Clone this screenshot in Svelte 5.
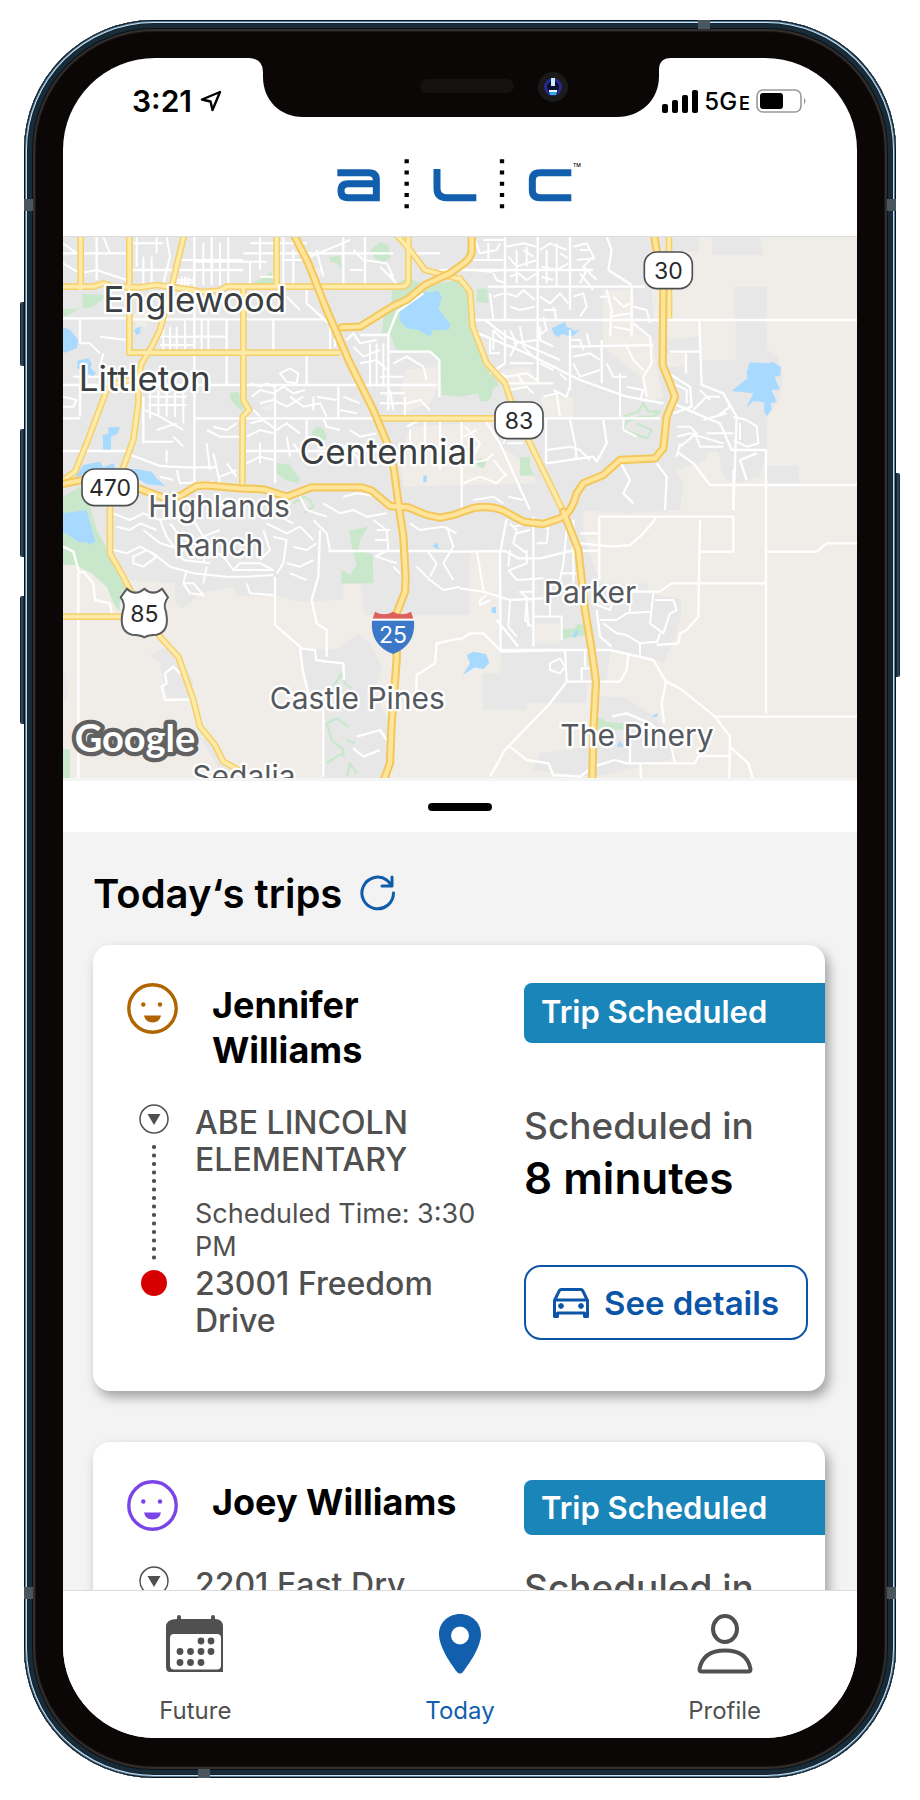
<script lang="ts">
	interface Trip {
		id: number;
		rider: string;
		color: string;
		status: string;
		pickup: string;
		time?: string;
		dropoff?: string;
		due?: string;
	}

	const trips: Trip[] = [
		{
			id: 1,
			rider: 'Jennifer Williams',
			color: '#b06500',
			status: 'Trip Scheduled',
			pickup: 'ABE LINCOLN ELEMENTARY',
			time: '3:30 PM',
			dropoff: '23001 Freedom Drive',
			due: '8 minutes'
		},
		{
			id: 2,
			rider: 'Joey Williams',
			color: '#7a45e6',
			status: 'Trip Scheduled',
			pickup: '2201 East Dry'
		}
	];

	let tab = $state('Today');

	const tabs = ['Future', 'Today', 'Profile'];

	// Map geometry, three units to a pixel
	const water = [
		'M1020 240 1050 215 1075 190 1135 183 1145 205 1135 235 1172 285 1165 300 1120 300 1110 320 1075 300 1040 295 1018 270Z',
		'M1475 295 1515 275 1520 290 1545 302 1560 300 1535 320 1505 312 1495 322 1482 312Z',
		'M2070 397 2125 400 2140 396 2163 412 2160 438 2143 440 2160 478 2135 480 2150 515 2132 520 2135 540 2120 558 2112 545 2113 518 2080 513 2058 535 2080 490 2015 483 2062 445 2060 425Z',
		'M9 292 30 300 55 330 50 355 15 368 9 365Z',
		'M52 392 85 385 95 400 92 415 108 430 98 440 75 425 52 415Z',
		'M145 592 180 592 172 612 153 620 153 660 130 662 128 615 145 612Z',
		'M45 740 70 705 120 695 130 712 160 700 165 715 235 718 275 725 290 745 315 768 260 762 225 740Z',
		'M9 850 80 840 92 885 107 935 85 945 80 935 60 938 9 905Z',
		'M1220 1275 1240 1265 1278 1272 1288 1298 1270 1318 1245 1312 1208 1335 1230 1300Z',
		'M222 300 242 288 240 310 228 315Z',
		'M308 315 322 320 318 328 308 326Z',
		'M1118 950 1130 935 1138 958Z',
		'M1295 1133 1308 1130 1308 1150 1295 1148Z',
		'M1545 1202 1557 1200 1548 1222 1538 1222Z',
		'M1670 1550 1680 1532 1690 1550Z',
		'M1775 1460 1793 1448 1792 1460Z',
		'M1090 738 1100 736 1100 757 1090 757Z'
	];

	const parks = [
		'M995 165 1045 145 1100 165 1200 150 1230 180 1238 290 1280 400 1318 465 1300 475 1295 500 1280 515 1260 512 1255 490 1200 500 1145 495 1138 390 1110 368 1010 362 990 312 965 308 970 265 995 240Z',
		'M930 62 960 35 985 45 992 80 970 98 945 85Z',
		'M807 80 840 78 845 118 830 100 812 95Z',
		'M578 160 612 140 635 125 640 165Z',
		'M66 192 130 195 128 208 100 230 70 235Z',
		'M9 238 60 235 9 265Z',
		'M510 490 535 485 545 520 550 545 530 530 512 510Z',
		'M650 698 690 705 718 745 715 760 680 752 650 730Z',
		'M755 605 770 590 790 595 800 625 780 640 755 620Z',
		'M9 800 60 770 90 830 110 900 145 960 175 1030 205 1085 180 1110 178 1145 160 1120 140 1070 95 1030 45 1005 9 1005Z',
		'M1250 178 1282 175 1285 220 1250 215Z',
		'M1380 682 1410 682 1410 715 1425 737 1380 737Z',
		'M1248 690 1265 684 1280 695 1270 715 1250 708Z',
		'M868 900 880 900 925 890 900 930 895 960 938 975 940 1060 842 1060 845 1020 870 1035 890 1005 875 950Z',
		'M1508 1198 1545 1195 1550 1183 1575 1182 1575 1215 1510 1226Z',
		'M1612 1460 1640 1475 1695 1480 1690 1500 1640 1495 1612 1500Z',
		'M9 1555 30 1560 30 1644 9 1644Z'
	];

	const trails = [
		'M1690 560 1735 545 1750 520 1765 545 1800 545 1775 560 1740 560 1700 575 1688 600 1720 610 1760 625 1775 600 1730 580',
		'M820 1370 845 1330 855 1360 875 1375M800 1480 830 1465 865 1490M800 1480 815 1530 850 1560 850 1580M860 1530 885 1540M800 1600 845 1570M860 1640 870 1600 890 1630',
		'M700 820 730 800 750 810 760 830 730 850'
	];

	const arterials = [
		'M9 70H200M215 120H550M403 21V765M455 21V165M110 21V150M850 21V170M915 21V170M1035 70H1140M550 70H1000',
		'M210 268H800M403 320H500M500 268V465M640 268V370M9 265H210M60 265V340M740 165V220L840 310',
		'M9 465H1130M60 465V560M9 565H60M250 500V640M403 565H950M645 465V760M740 370V465M835 470V565M9 663H205M200 670 300 708 380 712 470 712M550 663H960M740 565V650',
		'M985 312 1012 245 1090 190M985 312V540M900 315H985M990 365H1110L1138 390V500M1035 500V565M1140 565V720M1095 565V640',
		'M1138 120H1600M1285 170H1755M1235 270H2391M1335 21V270M1433 21V460M1530 21V240M1335 300V400L1290 430',
		'M1255 310 1400 370 1560 450 1700 500 1810 520M1335 460H1480M1450 565H1800M1458 565V700M1530 300V480M1625 330V460M1715 170V320M1530 350 1780 345',
		'M1640 21 1655 60 1645 120 1715 165M1640 180 1655 240 1650 320M1275 270 1340 320 1500 390',
		'M1918 270 1925 465 1990 490 2030 560 2020 840M1825 430 1890 470 1895 530 1840 550M1830 365H1918M1878 370V430M1840 520 1930 560 1980 580 2015 660H2118V1450M1950 765H2391M1855 668 1900 700 1950 765',
		'M1790 700 1820 740 1815 840M1680 695 1710 750 1690 790 1720 820M1275 570 1320 640 1360 730 1410 840M1205 575V840M1458 700 1600 680 1610 695 1640 640 1630 570M2090 670 2040 690 2060 750M2020 720V840',
		'M805 963H1110L1200 965 1335 963 1375 985 1440 985 1530 963 1615 962M1340 868 1320 970 1322 1260M1420 860V1250M1200 1075 1270 1085 1350 1110 1450 1105M1310 1170 1375 1250',
		'M1322 1260H1650L1780 1290 1818 1355 1860 1375 1965 1460H2391M1200 1230 1230 1210 1270 1210 1325 1265M1320 1265 1515 1260 1520 1355 1470 1420 1335 1560 1290 1640M1518 1355H1680L1700 1320 1705 1270M1565 1355V1315H1590M1575 1260V1310',
		'M1618 860H2020V965H1920M1618 860V1050M1560 910H1620M1560 940 1660 950 1710 945 1750 910 1780 875 1790 860M1920 870 1915 1160 1880 1200 1860 1210 1855 1240 1790 1245M1715 1085H1800L1835 1060H2115M2118 965H2270L2300 940H2391',
		'M1610 1140 1620 1220 1655 1250M1425 1160H1505V1230M1818 1355 1805 1420 1812 1480M1965 1460 2010 1520 2008 1644M2010 1550 2065 1600 2078 1644M1915 1578H2005M1350 1550 1400 1590 1465 1600 1480 1635 1560 1640 1600 1610 1665 1590 1700 1600H1850M1742 1600V1644M1710 1550V1600M1655 1460 1700 1450 1770 1480 1830 1530 1845 1600H1905L1915 1578',
		'M645 1040V1185L720 1250 728 1320 750 1410 790 1440V1640M780 900 775 1040 755 1110 770 1180 800 1200 800 1280M720 1255 765 1260 768 1290 800 1295 850 1300 852 1350',
		'M55 1644V1030L70 1025 100 1060 105 1110 150 1120 155 1150M9 950 40 965 58 1030M360 1330 340 1310 315 1330 320 1360 305 1370 315 1410 395 1408M1200 1225 1130 1240 1125 1300 1070 1335 1068 1410 1085 1440M890 1520 960 1500 980 1530M880 1555 910 1580 960 1560'
	];

	const locals = [
		'M400 180H500M250 80V165M275 80V165M430 40V165M480 40V165M505 21V165M320 21 330 80 310 160M345 90H550M400 95H620M600 21V120M700 60V165M570 40H740M9 100 60 130 110 120 200 150M130 21 150 70M9 40 50 70',
		'M345 150H400M350 158H400M365 140V170M375 140V170M385 140V170M220 40H310M230 21V110M290 21V70M665 90H735M670 21V165M570 95V165M600 140H640M680 200 720 240M770 60 790 140M790 165V220',
		'M310 290V370M330 290V370M350 290V370M375 270V370M425 270V370M445 270V370M300 320H403M300 345H403M60 340 90 340 120 370M120 320 200 330M40 440 150 440M9 500 50 510 40 530 9 530M130 370 120 410',
		'M270 480V565M295 480V560M320 480V560M345 470V560M370 480V580M265 500H380M265 525H380M255 540 300 560 370 600M250 635H340M340 620 370 650M320 660V700M290 600 350 580M460 670 480 760M440 640 450 720M350 720 360 760 460 755M500 700 530 740',
		'M570 460 600 470 620 460 645 470M575 500 600 480 640 490 670 470 700 490 735 480M600 520 640 510 680 530 730 500M580 540 600 560M660 430 690 415 715 430 710 460 680 455ZM570 580 610 570 650 600 680 580 720 610M560 620 600 600 640 610M690 500 730 530 780 520 800 560M770 500 830 510M560 700 600 680 640 690',
		'M760 500V540M790 565 800 590 840 600M850 500 900 520M840 540 890 550M870 600 900 620 950 610M820 640 860 650 900 690M460 590 500 600 530 580M440 600 480 620 540 620M300 740 340 750M480 740 530 720M600 640V700M680 620 690 680M700 640 735 690',
		'M860 330 880 310 900 340 950 330M880 350 910 380 960 360M900 400 950 390 980 420M850 370 880 400M810 290V360M825 290V350M930 340V470M950 340V470M970 340V470M960 440H1030M960 490H1035M960 520H1050M1040 590 1080 570M1050 600V640',
		'M880 60 910 90 980 100 1000 140M750 80 800 60 870 30M960 110 1000 150M870 120H910M990 130 1010 165M1000 400 1040 380 1090 410 1100 450M1040 520 1080 510 1110 540M990 480 1000 540',
		'M1245 30 1260 70 1310 60 1320 40M1240 90H1330M1240 120 1290 125 1325 120M1290 190 1300 270M1340 50 1390 40 1430 50M1345 80 1370 110 1430 90M1350 140 1375 130 1400 150 1430 130M1370 60V160M1440 60 1470 40 1520 60M1445 110 1490 120 1525 100M1460 60V160M1490 40V170M1540 50 1580 40 1600 80 1570 110 1610 150M1550 90 1605 85M1560 130 1600 180',
		'M1300 130 1310 150 1340 160M1270 30H1330M1285 40V90M1400 50V110M1300 200 1330 190M1390 60 1420 80M1500 70 1525 85M1445 140 1480 150M1560 60 1590 60M1580 120 1560 160M1450 260 1460 300 1430 320M1480 230 1490 270M1300 300V360',
		'M1340 190 1370 200 1390 180 1425 210M1350 230 1380 240 1425 230M1440 200 1470 220 1500 190 1525 220M1450 240 1490 240M1540 200 1570 190 1580 230 1560 260M1300 300 1330 330M1350 300 1370 340 1350 380M1380 290 1390 350 1420 380M1440 290V330L1480 350M1360 340 1430 330M1290 330V370H1320',
		'M1535 330 1560 330 1570 360M1540 380 1590 370 1620 390M1540 400 1560 440 1620 420M1580 310 1590 350M1620 200 1640 200M1660 200 1690 230 1710 220M1650 260 1710 250M1660 290 1710 300M1720 230 1760 240 1770 280M1720 280 1770 320 1775 400 1750 440 1760 500M1700 350 1720 390 1750 420M1640 400 1660 440 1700 440',
		'M1300 420 1340 440 1400 430 1430 450M1350 400 1420 400M1440 400 1480 420M1350 480 1400 470 1420 490M1450 500 1490 490 1500 560M1480 480 1520 500 1530 470M1680 430V560M1700 470 1750 480 1740 510M1530 570 1545 640 1550 690M1340 640H1390M1460 660 1530 650 1560 660 1590 690M1690 560V600L1730 620',
		'M1215 590 1260 640 1240 680M1210 620 1250 600M1220 700 1280 690 1300 670M1210 760 1260 740 1310 760 1340 730M1300 690 1340 740M1350 600 1330 640M1240 810 1300 800 1330 820M1345 800 1390 810M1370 430 1390 460M1500 430 1520 450',
		'M1840 460 1880 480 1880 520M1850 590 1890 590 1910 610 1860 650M1900 540 1940 500 1980 500M1930 570 2000 550M1940 610 2020 610M1850 620 1890 610 1990 640M1900 600 1920 650 1990 650M1990 490 2010 530 1970 560M2020 560 2060 570 2090 590 2095 640 2060 650 2020 630M2040 580V630M1860 640 1850 680M1920 480 1950 510',
		'M160 850 210 870 250 850 300 870 360 860M170 890 210 900 240 880 290 900M250 900 300 940 370 960 400 930M220 980 260 960 290 980 250 1010 220 1000ZM160 960 200 970 240 950 280 970 330 1010 400 1030 500 1040M330 880 360 920 410 940M300 870 320 920 370 990 450 1000M400 870 430 920 480 900M430 1000 440 950 490 980 520 1020',
		'M380 1020 370 1060 400 1060 430 1095 390 1090 370 1060M440 1010 430 1060M500 1040 560 1040 640 1035M520 1020 540 1000 600 1000 640 1020ZM560 1060 570 1090 640 1095M620 880 680 910 720 890 760 930M640 920 680 930 670 1000 650 1030M700 950 740 960 770 940M680 1000 720 1010 760 990M690 1030 740 1050M610 900 630 960 600 990M660 860 700 880',
		'M790 820 840 850 880 840 920 860 980 850M720 800 740 840 800 860M760 870 800 910 810 960M850 800 890 790 960 800M940 870 980 900 985 960 945 980M950 900H990M945 930H985M950 980 1010 1000M1000 1010 1020 1030M1050 880 1080 900 1150 890 1190 910M1070 1010 1110 1050 1150 1080 1200 1070M1100 960 1130 1000 1110 1040M1160 890 1180 950 1150 1000 1180 1050',
		'M1350 880 1370 900 1360 940 1400 970M1370 910 1410 900M1360 890 1410 880 1465 895 1460 940 1430 940M1350 1020 1400 1000 1400 960M1345 1020 1370 1050 1450 1045M1350 960 1345 1010M1520 900 1510 1000 1500 1050M1540 870V1060M1500 1030H1560M1350 1110 1345 1190 1370 1220M1400 1110 1405 1190M1420 1085 1380 1085 1410 1110M1470 1110V1160',
		'M1400 1120 1395 1170 1415 1190M1600 1120 1650 1140 1660 1110M1620 1170 1670 1170 1700 1150 1770 1145M1630 1180 1670 1210 1700 1215 1740 1240 1790 1235M1710 1080 1710 1150M1780 1090 1770 1180 1810 1210 1830 1150 1850 1140 1840 1110 1785 1110M1740 1240V1275M1800 1210 1790 1240M1470 1300 1500 1285 1515 1310 1500 1330 1470 1320ZM1250 960 1270 1080M1280 1095 1260 1110 1260 1125 1290 1110'
	];

	const highways = [
		'M1827 15V265',
		'M1010 15 1050 60 1095 120 1200 148',
		'M9 170H100L130 160 160 170 240 172 290 165 340 172 400 180 420 186 480 182 500 170H1020Q1045 170 1045 150V15',
		'M208 15V368H840M62 15V180M650 15V165M550 172V510L567 540 548 560 547 765',
		'M372 15 340 150 300 300 275 350 245 400 235 440 235 520 220 630 185 725',
		'M210 450 160 462 140 480 80 640 45 725 9 750M950 565H1310',
		'M150 830V970L190 1040 210 1080 300 1220 355 1280 400 1410 420 1490 465 1545 490 1595 540 1622M9 1160H190',
		'M1195 140 1230 185 1238 290 1280 400 1335 460 1355 520 1410 640 1510 845'
	];

	const freeways = [
		'M845 292 900 290 1000 228 1040 210 1095 165 1170 130 1205 105Q1235 85 1235 60V15',
		'M1510 845 1555 960 1575 1140 1595 1260 1608 1355 1600 1500 1597 1650',
		'M9 762 66 750M235 775 310 803 360 798 410 768 440 766 540 775 610 778 680 800 755 772H905L935 782 990 828 1045 832 1100 855 1140 863 1180 855 1240 834Q1290 825 1330 842L1390 875 1450 882 1500 865Q1535 850 1550 790L1570 760 1630 735 1680 690 1785 685 1810 655 1820 560 1845 500 1830 460 1808 405 1810 180 1800 120 1782 15',
		'M702 15 745 100 800 240 870 400 940 540 990 660 1002 720 1018 840 1030 920 1037 1040 1035 1085 1010 1150V1290L995 1480 990 1600 968 1660'
	];

	const towns = [
		{ name: 'Englewood', x: 404, y: 247, city: true },
		{ name: 'Littleton', x: 254, y: 482, city: true },
		{ name: 'Centennial', x: 983, y: 703, city: true },
		{ name: 'Highlands', x: 477, y: 860 },
		{ name: 'Ranch', x: 477, y: 978 },
		{ name: 'Castle Pines', x: 892, y: 1438 },
		{ name: 'Sedalia', x: 552, y: 1671 },
		{ name: 'Parker', x: 1590, y: 1118 },
		{ name: 'The Pinery', x: 1731, y: 1548 }
	];

	const routes = [
		{ no: '30', x: 1825, y: 121, w: 144 },
		{ no: '83', x: 1377, y: 571, w: 144 },
		{ no: '470', x: 150, y: 772, w: 168 }
	];
</script>

<main class="stage">
	<div class="device">
		<i class="key mute"></i>
		<i class="key up"></i>
		<i class="key down"></i>
		<i class="key power"></i>
		<i class="band top"></i>
		<i class="band bottom"></i>
		<i class="band left high"></i>
		<i class="band left low"></i>
		<i class="band right high"></i>
		<i class="band right low"></i>

		<div class="screen">
			<svg class="notch" viewBox="250 58 422 60" aria-hidden="true">
				<path d="M250 57V58Q264 59 264 72V77C264 100 281 117 304 117H618C642 117 660 100 660 76V70Q660 58 672 58V57Z" fill="#0b0706" />
				<rect x="421" y="79" width="94" height="14" rx="7" fill="#131211" />
				<circle cx="554" cy="87" r="15" fill="#1b1a1a" />
				<circle cx="554" cy="87" r="9" fill="#29298c" />
				<circle cx="554" cy="87" r="6" fill="#0b1033" />
				<path d="M552 78h4v8h-4z" fill="#c9ecff" />
				<path d="M550 91h8l-1 4h-6z" fill="#39a9e6" />
				<path d="M550 90h8v2h-8z" fill="#eafaff" />
			</svg>

			<div class="status">
				<div class="clock">
					<span>3:21</span>
					<svg width="22" height="22" viewBox="0 0 22 22" aria-hidden="true">
						<path d="M20 2 2 9.500 10.500 11.500 12.500 20Z" fill="none" stroke="#000" stroke-width="2.400" stroke-linejoin="round" />
					</svg>
				</div>
				<div class="signal">
					<svg width="36" height="23" viewBox="0 0 36 23" aria-hidden="true">
						<rect y="14" width="6" height="9" rx="2" />
						<rect x="10" y="10" width="6" height="13" rx="2" />
						<rect x="20" y="5" width="6" height="18" rx="2" />
						<rect x="30" width="6" height="23" rx="2" />
					</svg>
					<span>5G<small>E</small></span>
					<svg width="51" height="24" viewBox="0 0 51 24" aria-hidden="true">
						<rect x="1" y="1" width="44" height="22" rx="6" fill="none" stroke="#999" stroke-width="1.600" />
						<rect x="4" y="4" width="23" height="16" rx="3" />
						<path d="M48 8.500Q51 12 48 15.500Z" fill="#999" />
					</svg>
				</div>
			</div>

			<header class="brand">
				<svg width="246" height="50" viewBox="1010 477 738 150" role="img" aria-label="ALC">
					<g fill="none" stroke="#125fae" stroke-width="21">
						<path d="M1011 518H1106Q1128 518 1128 540V593H1043Q1022 593 1022 572 1022 551 1043 551H1126" />
						<path d="M1310 507V565Q1310 593 1338 593H1428" />
						<path d="M1713 518H1618Q1596 518 1596 540V571Q1596 593 1618 593H1713" />
					</g>
					<path d="M1219 478V626M1505 478V626" stroke="#000" stroke-width="13" stroke-dasharray="12 21.600" />
					<text class="tm" x="1718" y="500">TM</text>
				</svg>
			</header>

			<svg class="map" viewBox="9 21 2382 1623" preserveAspectRatio="xMidYMid slice" role="img" aria-label="Map of the Centennial area">
				<rect x="9" y="21" width="2382" height="1623" fill="#f0ede8" />
				<path
					fill="#e7e7e7"
					d="M9 21H1915V65H1840L1775 180 1780 260 1830 330 1918 318 1925 390H2027V270L2022 240V170H2120V360L2150 375 2168 430 2160 500 2120 565V665L2100 740 2020 765 1940 690 1850 720 1870 760 1860 840 1700 850 1570 840 1570 910 1620 1060H1765V1090L1865 1108V1155L1838 1240 1812 1295 1650 1265 1640 1350 1580 1365V1420H1270V1330H1322V970H1230V1155H915L900 1062H850V1110L710 1115 640 1095 528 1098 520 1070 420 1090 368 1138 345 1118V1060L210 1050 110 900 9 800Z"
				/>
				<path
					fill="#e7e7e7"
					d="M765 21H910L905 75H757ZM1958 21H2100L2112 74H1955ZM2120 707H2217V760H2120ZM270 1275 330 1245 400 1350 395 1410 320 1400 300 1300ZM720 1258H830L895 1210 930 1240 965 1310 945 1400 1000 1500 990 1644H790V1440L750 1400ZM1268 1332H1322V1260H1400V1440H1268ZM1600 1395 1650 1400 1690 1400 1780 1455 1815 1500 1850 1580 1800 1600 1600 1640 1415 1620 1440 1570 1600 1550ZM9 1310 25 1370 20 1410 9 1420ZM415 1520 460 1530 520 1620 480 1620 450 1570Z"
				/>
				<path
					fill="#f0ede8"
					d="M1630 180H1720V280L1780 330 1790 420 1810 500 1760 520 1740 440 1630 350ZM1330 420 1410 410 1430 460 1330 490ZM1040 420 1130 410 1135 470 1110 520 1040 545 1020 490ZM1050 590 1300 575 1310 640 1400 700 1430 760 1030 770 1020 690ZM740 110 790 115 770 160 750 150ZM1935 668 1975 665 1990 740 1950 735ZM1820 370H1880V410H1820ZM600 535 640 518 635 545ZM1425 1180H1500V1240H1425ZM1440 500H1540V570H1460ZM220 250 270 245 260 290 230 290Z"
				/>
				{#each parks as d}
					<path {d} fill="#c9e8cb" />
				{/each}
				{#each water as d}
					<path {d} fill="#a8d9ff" />
				{/each}
				{#each trails as d}
					<path {d} class="trail" />
				{/each}
				{#each locals as d}
					<path {d} class="local" />
				{/each}
				{#each arterials as d}
					<path {d} class="arterial" />
				{/each}
				{#each highways as d}
					<path {d} class="highway-edge" />
				{/each}
				{#each highways as d}
					<path {d} class="highway" />
				{/each}
				{#each freeways as d}
					<path {d} class="freeway-edge" />
				{/each}
				{#each freeways as d}
					<path {d} class="freeway" />
				{/each}

				{#each routes as route (route.no)}
					<rect
						x={route.x - route.w / 2}
						y={route.y - 55}
						width={route.w}
						height="110"
						rx="38"
						fill="#fff"
						stroke="#4d4f51"
						stroke-width="5"
					/>
					<text class="route" x={route.x} y={route.y + 25}>{route.no}</text>
				{/each}
				<path
					d="M201 1076Q226 1100 253 1076 280 1100 306 1076L324 1102Q308 1122 318 1146 330 1205 290 1214 265 1214 253 1222 241 1214 216 1214 176 1205 188 1146 198 1122 182 1102Z"
					fill="#fff"
					stroke="#5a5c5e"
					stroke-width="6"
					stroke-linejoin="round"
				/>
				<text class="route" x="253" y="1176">85</text>
				<path d="M945 1145Q972 1160 999 1145 1026 1160 1053 1145L1060 1166H938Z" fill="#dd5f5c" />
				<path d="M936 1166H1062V1172H936Z" fill="#fff" />
				<path d="M936 1172H1062Q1068 1245 999 1272 930 1245 936 1172Z" fill="#3b78c8" />
				<text class="route interstate" x="999" y="1239">25</text>

				{#each towns as town (town.name)}
					<text class="town" class:city={town.city} x={town.x} y={town.y}>{town.name}</text>
				{/each}
				<text class="google" x="44" y="1567">Google</text>
			</svg>

			<div class="sheet">
				<button type="button" class="grip" aria-label="Resize the map"></button>
			</div>

			<section class="trips">
				<div class="heading">
					<h1>Today‘s trips</h1>
					<button type="button" class="refresh" aria-label="Refresh trips">
						<svg width="36" height="36" viewBox="0 0 36 36" aria-hidden="true">
							<path d="M33.500 18A15.800 15.800 0 1 1 27 5.200L32 10.500M32 2V11H22" />
						</svg>
					</button>
				</div>

				{#each trips as trip (trip.id)}
					<article class="card">
						<div class="rider">
							<svg class="face" width="51" height="51" viewBox="0 0 51 51" aria-hidden="true">
								<circle cx="25.500" cy="25.500" r="23.700" fill="none" stroke={trip.color} stroke-width="3.400" />
								<circle cx="16.300" cy="21.500" r="2.200" fill={trip.color} />
								<circle cx="33" cy="21.500" r="2.200" fill={trip.color} />
								<path d="M17 32.500H34Q32.500 39.500 25.500 39.500T17 32.500Z" fill={trip.color} />
							</svg>
							<h2>{trip.rider}</h2>
						</div>
						<div class="badge" class:roomy={trip.due}>{trip.status}</div>

						<div class="stops">
							<div class="track">
								<svg width="30" height="30" viewBox="0 0 30 30" aria-hidden="true">
									<circle cx="15" cy="15" r="14" fill="none" stroke="#505050" stroke-width="1.500" />
									<path d="M8.500 10H21.500L15 21Z" fill="#505050" />
								</svg>
								<svg class="dots" width="4" height="120" viewBox="0 0 4 120" aria-hidden="true">
									<path d="M2 5V117" stroke="#505050" stroke-width="4.200" stroke-linecap="round" stroke-dasharray="0 8.500" />
								</svg>
								{#if trip.dropoff}
									<i class="end"></i>
								{/if}
							</div>
							<div class="places">
								<strong>{trip.pickup}</strong>
								{#if trip.time}
									<p>Scheduled Time: {trip.time}</p>
								{/if}
								{#if trip.dropoff}
									<strong>{trip.dropoff}</strong>
								{/if}
							</div>
						</div>

						<div class="due">
							<span>Scheduled in</span>
							{#if trip.due}
								<b>{trip.due}</b>
								<button type="button" class="details">
									<svg width="36" height="30" viewBox="0 0 36 30" aria-hidden="true">
										<path d="M1.500 28.500V12.500L6.200 2.800Q6.800 1.500 8.200 1.500H27.800Q29.200 1.500 29.800 2.800L34.500 12.500V28.500H31.500V25H4.500V28.500ZM2 12H34" />
										<circle cx="8" cy="18" r="2.400" />
										<circle cx="28" cy="18" r="2.400" />
									</svg>
									See details
								</button>
							{/if}
						</div>
					</article>
				{/each}
			</section>

			<nav class="tabs" aria-label="Main">
				{#each tabs as name (name)}
					<button
						type="button"
						class:active={tab === name}
						aria-current={tab === name ? 'page' : undefined}
						onclick={() => (tab = name)}
					>
						<svg width="60" height="60" viewBox="0 0 60 60" fill="currentColor" aria-hidden="true">
							{#if name === 'Future'}
								<path
									fill-rule="evenodd"
									d="M14 1Q16 1 16 3V5H46V3Q46 1 48 1T50 3V5Q58 5 58 13V58H5Q1 58 1 53V13Q1 5 12 5V3Q12 1 14 1ZM9 20Q5 20 5 24V51Q5 55.500 9 55.500H52Q56 55.500 56 51V24Q56 20 52 20Z"
								/>
								{#each [[36, 27], [46, 27], [15, 37.5], [25.5, 37.5], [36, 37.5], [46, 37.5], [15, 48.5], [25.5, 48.5], [36, 48.5]] as [cx, cy]}
									<circle {cx} {cy} r="3.400" />
								{/each}
							{:else if name === 'Today'}
								<path
									fill-rule="evenodd"
									d="M30 0C42 0 51 9 51 20 51 34 38 51 33 58Q30 61 27 58C22 51 9 34 9 20 9 9 18 0 30 0ZM30 12.500A9 9 0 1 0 30 30.500 9 9 0 1 0 30 12.500Z"
								/>
							{:else}
								<g fill="none" stroke="currentColor" stroke-width="4">
									<ellipse cx="30" cy="15" rx="12" ry="13" />
									<path d="M4.500 55Q8 36.500 30 36.500T55.500 55Q55.500 57.500 53 57.500H7Q4.500 57.500 4.500 55Z" />
								</g>
							{/if}
						</svg>
						<span>{name}</span>
					</button>
				{/each}
			</nav>
		</div>
	</div>
</main>

<style>
	:global(body) {
		margin: 0;
		background: #fff;
	}

	.stage {
		box-sizing: border-box;
		height: 100vh;
		padding: 20px 24px 22px;
		font-family: Inter, 'Liberation Sans', sans-serif;
		color: #000;
	}

	button {
		margin: 0;
		padding: 0;
		border: 0;
		background: none;
		color: inherit;
		font: inherit;
		cursor: pointer;
	}

	.device {
		position: relative;
		box-sizing: border-box;
		height: 100%;
		padding: 38px 39px 40px;
		border-radius: 130px;
		background: #0b0706;
		box-shadow:
			inset 0 0 0 1px #0b141c,
			inset 0 0 0 2px #5f7f98,
			inset 0 0 0 3px #c3e2f8,
			inset 0 0 0 4px #16242f,
			inset 0 0 0 8px #172b38,
			inset 0 0 0 9px #0b1116,
			inset 0 0 0 11px #322e2c,
			inset 0 0 0 12px #1a1615;
	}

	.key {
		position: absolute;
		left: -4px;
		width: 4px;
		border-radius: 2px 0 0 2px;
		background: linear-gradient(90deg, #0c1820, #37536a, #101c26);
	}

	.mute {
		top: 282px;
		height: 64px;
	}

	.up {
		top: 409px;
		height: 128px;
	}

	.down {
		top: 576px;
		height: 128px;
	}

	.power {
		top: 453px;
		right: -4px;
		left: auto;
		height: 204px;
		border-radius: 0 2px 2px 0;
	}

	.band {
		position: absolute;
		width: 9px;
		height: 12px;
		background: #4a565e;
	}

	.band.top,
	.band.bottom {
		width: 12px;
		height: 9px;
	}

	.band.top {
		top: 0;
		right: 186px;
	}

	.band.bottom {
		bottom: 0;
		left: 174px;
	}

	.band.left {
		left: 0;
	}

	.band.right {
		right: 0;
	}

	.band.high {
		top: 179px;
	}

	.band.low {
		bottom: 179px;
	}

	.screen {
		position: relative;
		display: flex;
		flex-direction: column;
		height: 100%;
		overflow: hidden;
		border-radius: 92px;
		background: #fff;
	}

	.notch {
		position: absolute;
		top: 0;
		left: 50%;
		width: 422px;
		height: 60px;
		transform: translateX(-50%);
	}

	.status {
		flex: none;
		display: flex;
		justify-content: space-between;
		align-items: center;
		height: 34px;
		padding: 26px 50px 0 69px;
	}

	.clock,
	.signal {
		display: flex;
		align-items: center;
		gap: 8px;
	}

	.clock {
		font-size: 30px;
		font-weight: 600;
	}

	.signal {
		gap: 6px;
		font-size: 24px;
		font-weight: 500;
	}

	.signal small {
		margin-left: 2px;
		font-size: 18px;
		font-weight: 600;
	}

	.brand {
		flex: none;
		display: flex;
		justify-content: center;
		padding: 41px 0 27px;
		border-bottom: 1px solid #dedede;
	}

	.tm {
		font: 500 15px Inter, sans-serif;
	}

	.map {
		flex: none;
		display: block;
		width: 100%;
		height: 541px;
	}

	.map path {
		stroke-linejoin: round;
	}

	.trail,
	.local,
	.arterial,
	.highway,
	.highway-edge,
	.freeway,
	.freeway-edge {
		fill: none;
	}

	.trail {
		stroke: #c9e8cb;
		stroke-width: 7px;
	}

	.local {
		stroke: #fff;
		stroke-width: 6px;
	}

	.arterial {
		stroke: #fff;
		stroke-width: 7px;
	}

	.highway-edge {
		stroke: #f5cf6b;
		stroke-width: 20px;
	}

	.highway {
		stroke: #ffeba8;
		stroke-width: 11px;
	}

	.freeway-edge {
		stroke: #f3c75c;
		stroke-width: 25px;
		stroke-linecap: round;
	}

	.freeway {
		stroke: #ffe599;
		stroke-width: 13px;
		stroke-linecap: round;
	}

	.town {
		fill: #55595e;
		stroke: #fff;
		stroke-width: 14px;
		stroke-linejoin: round;
		paint-order: stroke;
		font-size: 90px;
		text-anchor: middle;
	}

	.town.city {
		fill: #3c3f42;
		font-size: 105px;
	}

	.route {
		fill: #27292b;
		font-size: 69px;
		text-anchor: middle;
	}

	.interstate {
		fill: #fff;
	}

	.google {
		fill: #fff;
		stroke: #616161;
		stroke-width: 26px;
		stroke-linejoin: round;
		paint-order: stroke;
		font: 700 114px Lato, sans-serif;
	}

	.sheet {
		flex: none;
		display: flex;
		justify-content: center;
		align-items: center;
		height: 51px;
		border-top: 3px solid #f5f5f5;
	}

	.grip {
		width: 64px;
		height: 8px;
		border-radius: 4px;
		background: #000;
	}

	.trips {
		flex: 1;
		min-height: 0;
		padding: 36px 32px 0 30px;
		overflow: hidden;
		background: #f3f3f3;
	}

	.heading {
		display: flex;
		align-items: center;
		gap: 18px;
		height: 52px;
		margin-bottom: 25px;
	}

	h1,
	h2,
	p {
		margin: 0;
	}

	h1 {
		font-size: 40px;
		font-weight: 600;
		line-height: 52px;
	}

	.refresh {
		height: 38px;
	}

	.refresh path {
		fill: none;
		stroke: #0f5cab;
		stroke-width: 3px;
		stroke-linecap: round;
		stroke-linejoin: round;
	}

	.card {
		box-sizing: border-box;
		display: grid;
		grid-template-columns: minmax(0, 1fr) 301px;
		grid-template-rows: auto 1fr;
		row-gap: 31px;
		min-height: 446px;
		margin-bottom: 51px;
		padding: 38px 0 30px 34px;
		border-radius: 17px;
		background: #fff;
		box-shadow: 4px 6px 12px rgb(0 0 0 / 34%);
	}

	.rider {
		display: flex;
		align-items: flex-start;
		gap: 34px;
	}

	.face {
		flex: none;
	}

	h2 {
		max-width: 255px;
		font-size: 36px;
		font-weight: 700;
		line-height: 45px;
	}

	.badge {
		align-self: start;
		padding: 8px 17px;
		border-radius: 8px 0 0 8px;
		background: #1985b9;
		color: #fff;
		font-size: 31px;
		font-weight: 600;
		line-height: 39px;
	}

	.badge.roomy {
		padding-top: 9px;
		padding-bottom: 12px;
	}

	.stops {
		display: flex;
		gap: 26px;
		padding-left: 12px;
		color: #505050;
	}

	.track {
		flex: none;
		display: flex;
		flex-direction: column;
		align-items: center;
		gap: 8px;
		width: 30px;
	}

	.end {
		width: 26px;
		height: 26px;
		border-radius: 50%;
		background: #d70000;
	}

	.places {
		max-width: 300px;
	}

	.places strong {
		display: block;
		font-size: 32px;
		font-weight: 500;
		line-height: 37px;
	}

	.places p {
		margin: 19px 0 2px;
		font-size: 27px;
		line-height: 33px;
	}

	.due {
		display: flex;
		flex-direction: column;
		align-items: flex-start;
	}

	.due span {
		color: #505050;
		font-size: 37px;
		font-weight: 500;
		line-height: 44px;
	}

	.due b {
		font-size: 44px;
		font-weight: 600;
		line-height: 60px;
	}

	.details {
		display: flex;
		justify-content: center;
		align-items: center;
		gap: 15px;
		box-sizing: border-box;
		width: 284px;
		height: 75px;
		margin-top: 57px;
		border: 2px solid #0b55a8;
		border-radius: 17px;
		color: #0b55a8;
		font-size: 33px;
		font-weight: 600;
	}

	.details path {
		fill: none;
		stroke: currentColor;
		stroke-width: 3px;
		stroke-linejoin: round;
	}

	.details circle {
		fill: currentColor;
		stroke: currentColor;
	}

	.tabs {
		flex: none;
		display: grid;
		grid-template-columns: repeat(3, 1fr);
		height: 147px;
		border-top: 1px solid #dcdcdc;
		background: #fff;
	}

	.tabs button {
		display: flex;
		flex-direction: column;
		align-items: center;
		gap: 21px;
		padding-top: 23px;
		color: #505050;
		font-size: 24px;
		line-height: 32px;
	}

	.tabs .active {
		color: #125fae;
	}
</style>
